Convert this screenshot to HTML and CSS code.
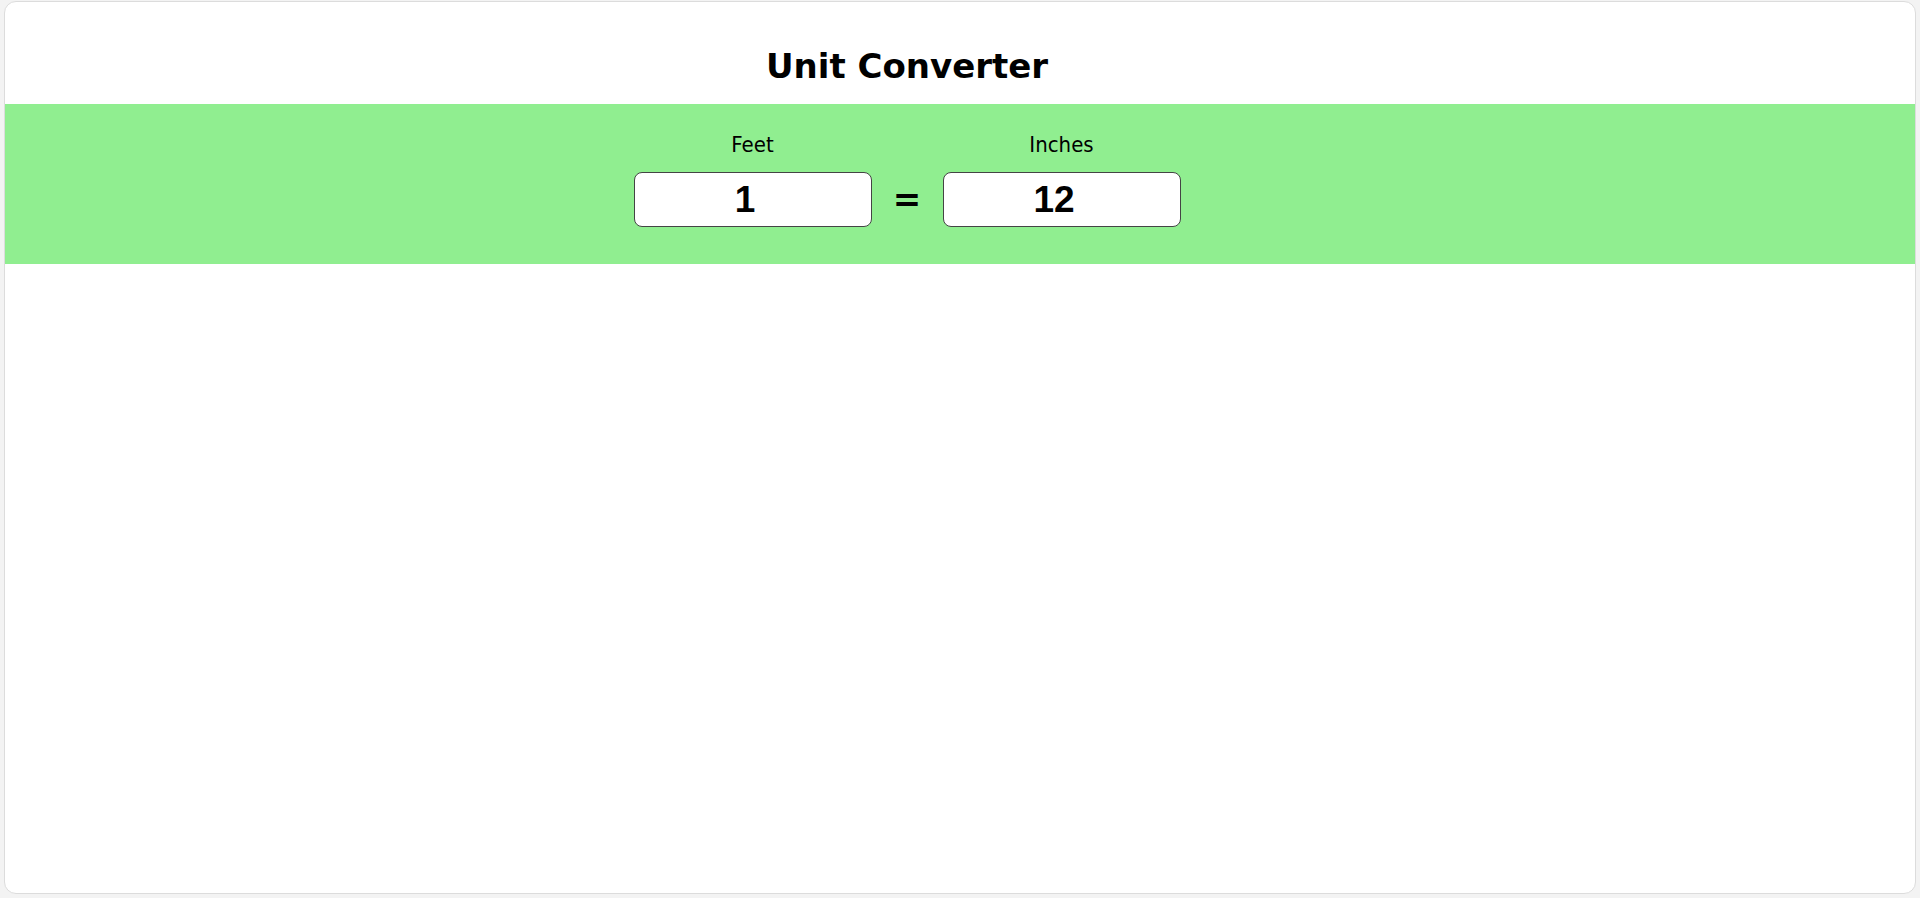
FILE: index.html
```html
<!DOCTYPE html>
<html lang="en">
  <head>
    <meta charset="UTF-8" />
    <meta name="viewport" content="width=device-width, initial-scale=1.0" />
    <title>Unit Converter</title>
    <link rel="stylesheet" href="styles.css">
  </head>
  <body>
    <div class="card">
      <div class="header">
        <h1>Unit Converter</h1>
      </div>
      <div class="band">
        <div class="converter">
          <div class="unit">
            <label for="feet">Feet</label>
            <input id="feet" type="number" value="1" oninput="convert('feet')" />
          </div>
          <div class="equals">=</div>
          <div class="unit">
            <label for="inches">Inches</label>
            <input id="inches" type="number" value="12" oninput="convert('inches')" />
          </div>
        </div>
      </div>
    </div>

    <script>
      const feet = document.getElementById("feet");
      const inches = document.getElementById("inches");

      function convert(from) {
        if (from === "feet") {
          let value = parseFloat(feet.value);
          inches.value = isNaN(value) ? "" : +(value * 12).toFixed(4);
        } else {
          let value = parseFloat(inches.value);
          feet.value = isNaN(value) ? "" : +(value / 12).toFixed(4);
        }
      }
    </script>
  </body>
</html>
```

FILE: styles.css
```css
body,
html {
  margin: 0;
  padding: 0;
  background-color: #f3f3f3;
}
body {
  padding: 1px 4px 4px 4px;
}

.card {
  box-sizing: border-box;
  height: 893px;
  background-color: #fff;
  border: 1px solid #dcdcdc;
  border-radius: 12px;
  overflow: hidden;
}

.header {
  padding: 44px 106px 18px 0;
  text-align: center;
}
.header h1 {
  margin: 0;
  font-family: "DejaVu Sans", sans-serif;
  font-weight: bold;
  font-size: 34px;
  line-height: 40px;
  color: #000;
}

.band {
  background-color: #90ee90;
  padding: 28px 106px 37px 0;
}

.converter {
  display: flex;
  justify-content: center;
  align-items: flex-end;
}

.unit {
  display: flex;
  flex-direction: column;
  align-items: center;
  width: 238px;
}
.unit label {
  font-family: "DejaVu Sans Condensed", "DejaVu Sans", sans-serif;
  font-size: 22px;
  line-height: 26px;
  color: #000;
  margin-bottom: 14px;
}
.unit input {
  box-sizing: border-box;
  width: 238px;
  height: 55px;
  padding: 0 2px;
  border: 1px solid #444;
  border-radius: 8px;
  background-color: #fff;
  text-align: center;
  font-family: "Liberation Sans", Arial, sans-serif;
  font-weight: bold;
  font-size: 37px;
  color: #000;
  outline: none;
}

.equals {
  width: 71px;
  height: 55px;
  line-height: 55px;
  text-align: center;
  font-family: "DejaVu Sans", sans-serif;
  font-weight: bold;
  font-size: 34px;
  color: #000;
}
```
